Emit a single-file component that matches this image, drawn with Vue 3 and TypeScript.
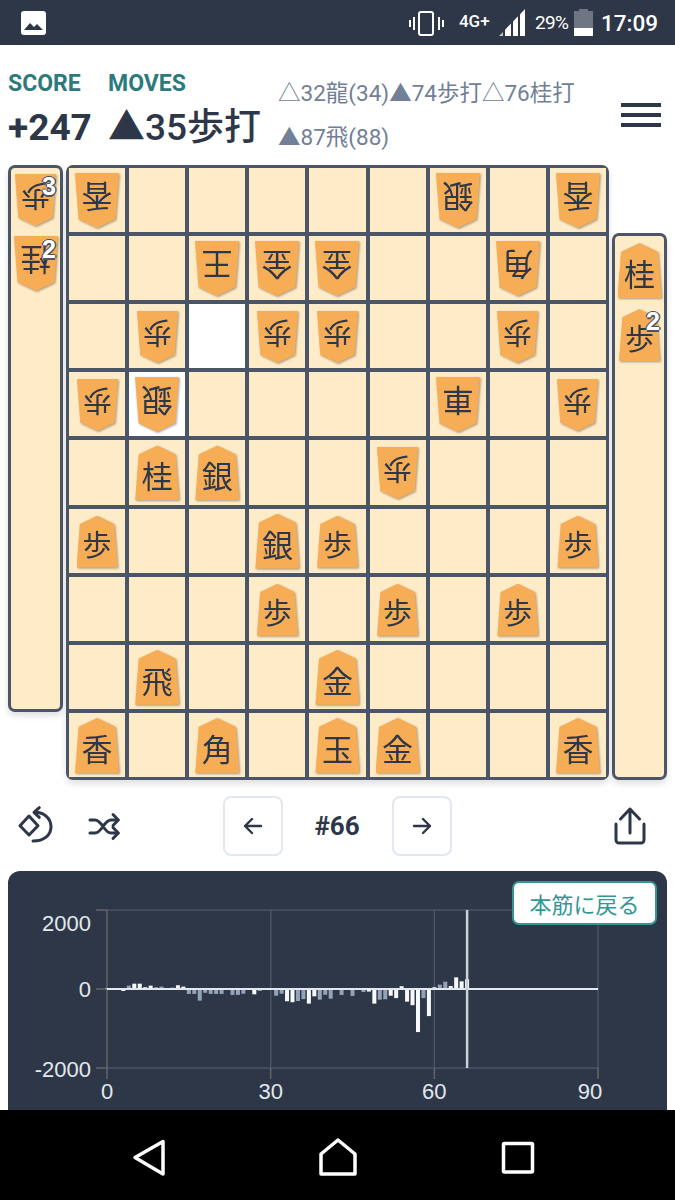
<script setup lang="ts">
interface Piece {
  r: number;
  c: number;
  k: string;
  flip?: boolean;
}

const rows = [0, 1, 2, 3, 4, 5, 6, 7, 8];
const highlighted = ['2-2', '3-1'];

const pieces: Piece[] = [
  { r: 0, c: 0, k: '香', flip: true },
  { r: 0, c: 6, k: '銀', flip: true },
  { r: 0, c: 8, k: '香', flip: true },
  { r: 1, c: 2, k: '王', flip: true },
  { r: 1, c: 3, k: '金', flip: true },
  { r: 1, c: 4, k: '金', flip: true },
  { r: 1, c: 7, k: '角', flip: true },
  { r: 2, c: 1, k: '歩', flip: true },
  { r: 2, c: 3, k: '歩', flip: true },
  { r: 2, c: 4, k: '歩', flip: true },
  { r: 2, c: 7, k: '歩', flip: true },
  { r: 3, c: 0, k: '歩', flip: true },
  { r: 3, c: 1, k: '銀', flip: true },
  { r: 3, c: 6, k: '車', flip: true },
  { r: 3, c: 8, k: '歩', flip: true },
  { r: 4, c: 1, k: '桂' },
  { r: 4, c: 2, k: '銀' },
  { r: 4, c: 5, k: '歩', flip: true },
  { r: 5, c: 0, k: '歩' },
  { r: 5, c: 3, k: '銀' },
  { r: 5, c: 4, k: '歩' },
  { r: 5, c: 8, k: '歩' },
  { r: 6, c: 3, k: '歩' },
  { r: 6, c: 5, k: '歩' },
  { r: 6, c: 7, k: '歩' },
  { r: 7, c: 1, k: '飛' },
  { r: 7, c: 4, k: '金' },
  { r: 8, c: 0, k: '香' },
  { r: 8, c: 2, k: '角' },
  { r: 8, c: 4, k: '玉' },
  { r: 8, c: 5, k: '金' },
  { r: 8, c: 8, k: '香' },
];

function pieceAt(r: number, c: number) {
  return pieces.find((p) => p.r === r && p.c === c);
}

const moves = ['△32龍(34)', '▲74歩打', '△76桂打', '▲87飛(88)'];

// score per move, index is the move number
const scores = [
  10, -5, -5, -50, 85, 135, 135, 45, 85, 45, 60, 10, 35, 95, 60, -125, -125, -295, -95, -125, -125, -125, 25, -150,
  -150, -120, 5, -135, -50, 25, 0, -170, -120, -310, -335, -305, -255, -370, -185, -270, -145, -245, 10, -150, 0, -175,
  0, -75, -65, -370, -270, -260, -170, -230, 70, -320, -410, -1090, -230, -685, 45, 110, 185, 75, 295, 195, 247,
];
const dim = [
  4, 9, 10, 11, 12, 15, 16, 17, 18, 19, 20, 21, 22, 23, 24, 25, 28, 29, 31, 32, 35, 36, 39, 40, 41, 42, 43, 45, 47, 50,
  51, 58, 61, 62,
];

const xAt = (move: number) => 99 + move * 5.456;
const yAt = (score: number) => 118 - (score * 79) / 2000;

const bars = scores.map((s, i) => ({
  x: xAt(i) - 2,
  y: s > 0 ? yAt(s) : 118,
  h: Math.abs(s) * 0.0395,
  fill: dim.includes(i) ? '#94a3b8' : '#f7fafc',
}));

const xTicks = [0, 30, 60, 90];
const yTicks = [
  { v: 2000, y: yAt(2000) },
  { v: 0, y: yAt(0) },
  { v: -2000, y: yAt(-2000) },
];
const yLabels = [
  { v: 2000, y: 60 },
  { v: 0, y: 126 },
  { v: -2000, y: 206 },
];
const xLabels = [
  { v: 0, x: xAt(0) },
  { v: 30, x: xAt(30) },
  { v: 60, x: xAt(60) },
  { v: 90, x: xAt(90) - 8 },
];
</script>

<template>
  <div class="page">
    <div class="status">
      <svg class="pic" width="25" height="24" viewBox="0 0 25 24">
        <rect width="25" height="24" rx="3" fill="#fff" />
        <path d="M3 19l6-7 4 4 3-3 6 6z" fill="#2d3748" />
      </svg>
      <div class="status-right">
        <svg width="35" height="26" viewBox="0 0 35 26" fill="none">
          <rect x="10" y="2" width="14" height="23" rx="2" stroke="#fff" stroke-width="2" />
          <path d="M1 10v7M5 7v13M30 7v13M34 10v7" stroke="#fff" stroke-width="2" />
        </svg>
        <span class="net">4G+</span>
        <svg width="26" height="27" viewBox="0 0 26 27" fill="#fff">
          <polygon points="0,27 4,27 4,23 0,27" opacity=".7" />
          <polygon points="6,27 12,27 12,14.5 6,20.8" />
          <polygon points="14,27 19,27 19,7.3 14,12.5" />
          <polygon points="21,27 26,27 26,0 21,5.2" />
        </svg>
        <span class="pct">29%</span>
        <svg width="19" height="27" viewBox="0 0 19 27">
          <path d="M5 0h9v2h5v18H0V2h5z" fill="#6e7583" />
          <rect y="19" width="19" height="8" fill="#fff" />
        </svg>
        <span class="time">17:09</span>
      </div>
    </div>

    <main class="main">
      <header class="head">
        <div class="col score">
          <div class="label">SCORE</div>
          <div class="value">+247</div>
        </div>
        <div class="col last">
          <div class="label">MOVES</div>
          <div class="value">▲35歩打</div>
        </div>
        <div class="moves">
          <span v-for="m in moves" :key="m">{{ m }}</span>
        </div>
        <button class="menu" aria-label="menu"><i></i><i></i><i></i></button>
      </header>

      <section class="game">
        <div class="hand hand-top">
          <div class="slot">
            <div class="piece small"><div class="face flip">歩</div></div>
            <b class="count">3</b>
          </div>
          <div class="slot">
            <div class="piece"><div class="face flip">桂</div></div>
            <b class="count">2</b>
          </div>
        </div>

        <div class="board">
          <template v-for="r in rows" :key="r">
            <div
              v-for="c in rows"
              :key="c"
              class="cell"
              :class="{ lit: highlighted.includes(r + '-' + c) }"
            >
              <div v-if="pieceAt(r, c)" class="piece" :class="{ small: pieceAt(r, c)?.k === '歩' }">
                <div class="face" :class="{ flip: pieceAt(r, c)?.flip }">{{ pieceAt(r, c)?.k }}</div>
              </div>
            </div>
          </template>
        </div>

        <div class="hand hand-bottom">
          <div class="slot">
            <div class="piece"><div class="face">桂</div></div>
          </div>
          <div class="slot">
            <div class="piece small"><div class="face">歩</div></div>
            <b class="count">2</b>
          </div>
        </div>
      </section>

      <div class="controls">
        <div class="tools">
          <svg width="42" height="42" viewBox="0 0 42 42" fill="none" stroke="#2d3748" stroke-width="3">
            <path d="M5 20.7L14 11l9 9.700L14 30z" stroke-linejoin="round" />
            <path d="M20 7.300c9 0 16 6 16 14.500S29 36 18 36" stroke-linecap="round" />
            <path d="M24.300 2.700L19 7.300l5.300 5" stroke-linecap="round" stroke-linejoin="round" />
          </svg>
          <svg width="40" height="42" viewBox="0 0 40 42" fill="none" stroke="#2d3748" stroke-width="3" stroke-linecap="round" stroke-linejoin="round">
            <path d="M5 15h5c7 0 9 13 16 13h7M5 28h5c7 0 9-13 16-13h7" />
            <path d="M28 9.500l5.300 5.500-5.300 5.500M28 22.500l5.300 5.500-5.300 5.500" />
          </svg>
        </div>
        <div class="pager">
          <button class="nav-btn" aria-label="previous">
            <svg width="20" height="18" viewBox="0 0 20 18" fill="none" stroke="#2d3748" stroke-width="2.400" stroke-linecap="round" stroke-linejoin="round">
              <path d="M18 9H2M9 2L2 9l7 7" />
            </svg>
          </button>
          <span class="num">#66</span>
          <button class="nav-btn" aria-label="next">
            <svg width="20" height="18" viewBox="0 0 20 18" fill="none" stroke="#2d3748" stroke-width="2.400" stroke-linecap="round" stroke-linejoin="round">
              <path d="M2 9h16M11 2l7 7-7 7" />
            </svg>
          </button>
        </div>
        <div class="share">
          <svg width="32" height="38" viewBox="0 0 32 38" fill="none" stroke="#2d3748" stroke-width="3" stroke-linecap="round" stroke-linejoin="round">
            <path d="M16 2v24M6.500 12L16 2l9.500 10" />
            <path d="M2 17v16a3 3 0 0 0 3 3h22a3 3 0 0 0 3-3V17" />
          </svg>
        </div>
      </div>

      <section class="chart">
        <button class="back">本筋に戻る</button>
        <svg width="659" height="240" viewBox="0 0 659 240">
          <g stroke="#4a5568" stroke-width="1.500">
            <line v-for="t in yTicks" :key="t.v" :x1="xAt(0)" :x2="xAt(90)" :y1="t.y" :y2="t.y" />
            <line v-for="t in xTicks.slice(1)" :key="t" :x1="xAt(t)" :x2="xAt(t)" y1="39" y2="197" />
          </g>
          <g stroke="#666" stroke-width="1.500">
            <line :x1="xAt(0)" :x2="xAt(0)" y1="39" y2="208" />
            <line v-for="t in yTicks" :key="t.v" x1="88" :x2="xAt(0)" :y1="t.y" :y2="t.y" />
            <line v-for="t in xTicks.slice(1)" :key="t" :x1="xAt(t)" :x2="xAt(t)" y1="197" y2="208" />
          </g>
          <rect v-for="(b, i) in bars" :key="i" :x="b.x" :y="b.y" width="4" :height="b.h" :fill="b.fill" />
          <line :x1="xAt(0)" :x2="xAt(90)" y1="118" y2="118" stroke="#e2e8f0" stroke-width="2" />
          <line :x1="xAt(66)" :x2="xAt(66)" y1="39" y2="197" stroke="#cbd0d6" stroke-width="2.500" />
          <g class="ticks">
            <text v-for="t in yLabels" :key="t.v" x="83" :y="t.y" text-anchor="end">{{ t.v }}</text>
            <text v-for="t in xLabels" :key="t.v" :x="t.x" y="228" text-anchor="middle">{{ t.v }}</text>
          </g>
        </svg>
      </section>
    </main>

    <nav class="android">
      <svg width="675" height="90" viewBox="0 0 675 90" fill="none" stroke="#fff" stroke-width="3.500" stroke-linejoin="round">
        <path d="M135 47.500L163 31.500V64z" />
        <path d="M338 30l17 14v20h-34V44z" />
        <rect x="503.500" y="33.500" width="29" height="28.500" rx="1" />
      </svg>
    </nav>
  </div>
</template>

<style>
body {
  margin: 0;
  background: #fff;
}
</style>

<style scoped>
.page {
  width: 675px;
  height: 1200px;
  overflow: hidden;
  display: flex;
  flex-direction: column;
  font-family: Roboto, "Noto Sans CJK JP", sans-serif;
  color: #2d3748;
}

.status {
  height: 45px;
  flex: none;
  background: #2d3748;
  color: #fff;
  display: flex;
  align-items: center;
  justify-content: space-between;
  padding: 0 17px 0 21px;
}
.status-right {
  display: flex;
  align-items: center;
}
.net {
  font-size: 17px;
  font-weight: 500;
  width: 31px;
  margin: 0 9px 0 15px;
  align-self: flex-start;
  line-height: 24px;
  white-space: nowrap;
}
.pct {
  font-size: 19px;
  margin: 0 6px 0 10px;
  width: 33px;
  white-space: nowrap;
  letter-spacing: -0.6px;
}
.time {
  font-size: 22.500px;
  font-weight: 500;
  margin-left: 8px;
}

.main {
  height: 1065px;
  flex: none;
  overflow: hidden;
}

.head {
  height: 120px;
  box-sizing: border-box;
  padding: 26px 14px 0 8px;
  display: flex;
  align-items: flex-start;
}
.col {
  white-space: nowrap;
}
.score {
  width: 100px;
}
.last {
  width: 170px;
}
.label {
  color: #2c7a7b;
  font-size: 23px;
  font-weight: 700;
  line-height: 26px;
}
.value {
  margin-top: 10px;
  font-size: 37px;
  font-weight: 700;
  line-height: 42px;
}
.last .value {
  font-weight: 500;
}
.moves {
  width: 310px;
  color: #718096;
  font-size: 22.500px;
  line-height: 44px;
}
.moves span {
  display: inline-block;
  white-space: nowrap;
}
.menu {
  margin: 32px 0 0 auto;
  width: 40px;
  height: 24px;
  padding: 0;
  border: 0;
  background: none;
  display: flex;
  flex-direction: column;
  justify-content: space-between;
}
.menu i {
  display: block;
  height: 4px;
  background: #2d3748;
}

.game {
  display: flex;
  gap: 3px;
  padding: 0 8px;
  height: 615px;
}
.hand {
  width: 55px;
  height: 547px;
  box-sizing: border-box;
  background: #feebc8;
  border: 3px solid #4a5568;
  border-radius: 7px;
  box-shadow: 0 4px 6px rgba(0, 0, 0, 0.12);
  display: flex;
  flex-direction: column;
  align-items: center;
  gap: 9px;
}
.hand-top {
  padding-top: 4px;
}
.hand-bottom {
  padding-top: 6px;
  align-self: flex-end;
}
.slot {
  position: relative;
  width: 49px;
  display: flex;
  justify-content: center;
}
.count {
  position: absolute;
  top: 1px;
  right: 4px;
  color: #fff;
  font: 700 25px/26px "Liberation Sans", sans-serif;
  text-shadow: -1.500px 0 #4a5568, 1.500px 0 #4a5568, 0 -1.500px #4a5568, 0 1.500px #4a5568;
}

.board {
  width: 543px;
  height: 615px;
  box-sizing: border-box;
  background: #4a5568;
  border: 3px solid #4a5568;
  border-radius: 7px;
  box-shadow: 0 4px 6px rgba(0, 0, 0, 0.12);
  display: grid;
  grid-template-columns: repeat(9, 1fr);
  grid-template-rows: repeat(9, 1fr);
  gap: 4px;
}
.cell {
  background: #feebc8;
  display: flex;
  align-items: center;
  justify-content: center;
  min-width: 0;
  min-height: 0;
}
.cell.lit {
  background: #fff;
}
.piece {
  width: 44px;
  height: 55px;
  margin-top: 1px;
  flex: none;
  filter: drop-shadow(1px 1px 1px rgba(0, 0, 0, 0.35));
}
.piece.small {
  width: 41px;
  height: 52px;
  margin-top: 2px;
}
.face {
  width: 100%;
  height: 100%;
  background: #f6ad55;
  clip-path: polygon(50% 0, 92% 16%, 100% 100%, 0 100%, 8% 16%);
  display: flex;
  align-items: center;
  justify-content: center;
  padding-top: 4px;
  box-sizing: border-box;
  font-size: 31px;
  line-height: 1;
  font-family: "Noto Sans CJK JP", sans-serif;
}
.small .face {
  font-size: 29px;
}
.face.flip {
  transform: rotate(180deg);
}

.controls {
  height: 60px;
  margin-top: 16px;
  padding: 0 16px 0 15px;
  display: grid;
  grid-template-columns: 1fr auto 1fr;
  align-items: center;
}
.tools {
  display: flex;
  gap: 28px;
}
.pager {
  display: flex;
  align-items: center;
}
.nav-btn {
  width: 60px;
  height: 60px;
  padding: 0;
  box-sizing: border-box;
  background: #fff;
  border: 2px solid #e2e8f0;
  border-radius: 8px;
  display: flex;
  align-items: center;
  justify-content: center;
}
.num {
  width: 109px;
  text-align: center;
  font-size: 26px;
  font-weight: 700;
}
.share {
  display: flex;
  justify-content: flex-end;
  margin-right: 13px;
}

.chart {
  position: relative;
  margin: 15px 8px 0;
  height: 300px;
  background: #2d3748;
  border-radius: 12px;
}
.chart svg {
  display: block;
}
.ticks text {
  fill: #e2e8f0;
  font: 22px "Liberation Sans", sans-serif;
}
.back {
  position: absolute;
  top: 10px;
  right: 10px;
  width: 145px;
  height: 44px;
  padding: 0;
  background: #fff;
  border: 2px solid #319795;
  border-radius: 7px;
  color: #319795;
  font: 22px "Noto Sans CJK JP", sans-serif;
}

.android {
  height: 90px;
  flex: none;
  background: #000;
}
.android svg {
  display: block;
}
</style>
